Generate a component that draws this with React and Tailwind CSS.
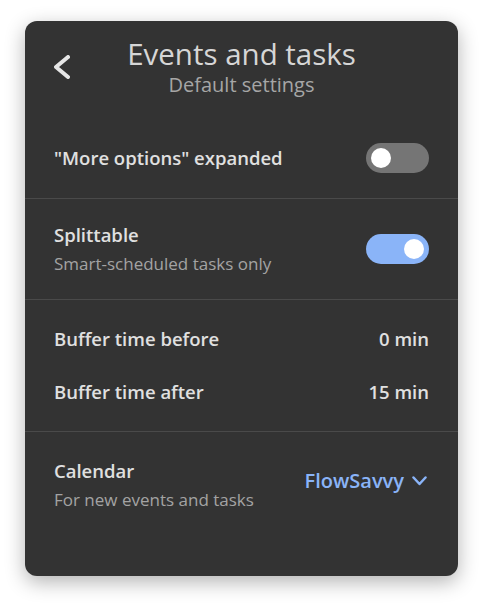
import React, { useState } from 'react';

function Toggle({ on, onChange }) {
  return (
    <button
      onClick={onChange}
      className={`flex h-[30px] w-[63px] shrink-0 items-center rounded-full px-[5px] ${
        on ? 'justify-end bg-[#8ab4f8]' : 'justify-start bg-[#757575]'
      }`}
    >
      <span className="block h-[20px] w-[20px] rounded-full bg-white" />
    </button>
  );
}

export default function App() {
  const [moreOptions, setMoreOptions] = useState(false);
  const [splittable, setSplittable] = useState(true);

  return (
    <div
      className="min-h-screen bg-white px-[25px] pt-[21px]"
      style={{ fontFamily: '"Open Sans", "Noto Sans", sans-serif' }}
    >
      <div className="flex flex-col rounded-[12px] bg-[#333333] shadow-[0_6px_20px_rgba(0,0,0,0.3)]">
        {/* Header */}
        <div className="grid grid-cols-[40px_1fr_40px] items-center px-[29px] pt-[16px]">
          <button className="flex h-[24px] w-[16px] items-center">
            <svg width="16" height="24" viewBox="0 0 16 24" fill="none">
              <path
                d="M14 2 L2 12 L14 22"
                stroke="#e6e6e6"
                strokeWidth="4"
                strokeLinecap="round"
                strokeLinejoin="round"
              />
            </svg>
          </button>
          <div className="flex flex-col items-center gap-[2px]">
            <div className="text-[29.5px] leading-[34px] text-[#d6d6d6]">Events and tasks</div>
            <div className="text-[20px] leading-[24px] text-[#a6a6a6]">Default settings</div>
          </div>
          <div />
        </div>

        {/* More options */}
        <div className="mt-[21px] flex h-[80px] items-center justify-between px-[29px]">
          <div className="text-[18.5px] font-semibold leading-[24px] text-[#e0e0e0]">
            "More options" expanded
          </div>
          <Toggle on={moreOptions} onChange={() => setMoreOptions(!moreOptions)} />
        </div>

        {/* Splittable */}
        <div className="flex h-[101px] items-center justify-between border-t border-[#4a4a4a] px-[29px]">
          <div className="flex flex-col gap-[6px]">
            <div className="text-[18.5px] font-semibold leading-[24px] text-[#e0e0e0]">Splittable</div>
            <div className="text-[17px] leading-[22px] text-[#a3a3a3]">Smart-scheduled tasks only</div>
          </div>
          <Toggle on={splittable} onChange={() => setSplittable(!splittable)} />
        </div>

        {/* Buffer times */}
        <div className="flex flex-col gap-[29px] border-t border-[#4a4a4a] px-[29px] py-[27px]">
          <div className="flex items-center justify-between text-[18.5px] font-semibold leading-[24px] text-[#e0e0e0]">
            <span>Buffer time before</span>
            <span>0 min</span>
          </div>
          <div className="flex items-center justify-between text-[18.5px] font-semibold leading-[24px] text-[#e0e0e0]">
            <span>Buffer time after</span>
            <span>15 min</span>
          </div>
        </div>

        {/* Calendar */}
        <div className="flex items-center justify-between border-t border-[#4a4a4a] px-[29px] pb-[65px] pt-[27px]">
          <div className="flex flex-col gap-[6px]">
            <div className="text-[18.5px] font-semibold leading-[24px] text-[#e0e0e0]">Calendar</div>
            <div className="text-[17px] leading-[22px] text-[#a3a3a3]">For new events and tasks</div>
          </div>
          <button className="-mt-[8px] mr-[2px] flex items-center gap-[8px] text-[20px] font-semibold leading-[24px] text-[#8ab4f8]">
            <span>FlowSavvy</span>
            <svg width="15" height="10" viewBox="0 0 15 10" fill="none">
              <path
                d="M1.5 1.5 L7.5 8 L13.5 1.5"
                stroke="#8ab4f8"
                strokeWidth="2.5"
                strokeLinecap="round"
                strokeLinejoin="round"
              />
            </svg>
          </button>
        </div>
      </div>
    </div>
  );
}
